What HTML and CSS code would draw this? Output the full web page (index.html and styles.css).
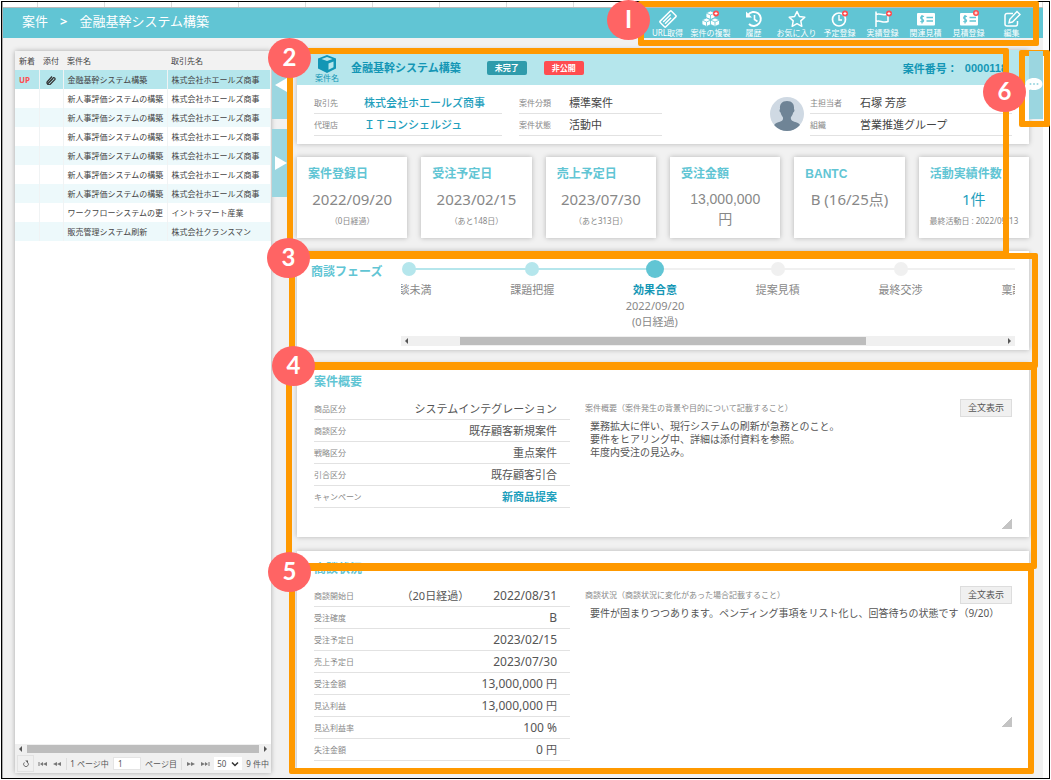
FILE: index.html
```html
<!DOCTYPE html>
<html lang="ja">
<head>
<meta charset="utf-8">
<meta name="viewport" content="width=device-width, initial-scale=1">
<title>案件 &gt; 金融基幹システム構築</title>
<link rel="stylesheet" href="styles.css">
</head>
<body>
<div class="frame">
<div class="app">
  <div class="ruler"></div>
  <header class="topbar">
    <nav class="crumbs"><span>案件</span><span class="crumb-sep">&gt;</span><span>金融基幹システム構築</span></nav>
    <div class="toolbar">
      <button type="button" class="tool">
        <svg viewBox="0 0 20 18"><g transform="rotate(-45 10 9)" fill="none" stroke="#fff" stroke-width="1.5"><rect x="2" y="5" width="16" height="8" rx="1"/><path d="M4.500 7.700H15M4.500 10.300H13"/></g></svg>
        <span>URL取得</span></button>
      <button type="button" class="tool">
        <svg viewBox="0 0 20 18"><g fill="#fff" stroke="#61c5d4" stroke-width=".8"><path d="M9.500 1l4.500 2v4.500L9.500 9.500 5 7.500V3z"/><path d="M5.500 8l4.500 2v4.500L5.500 16.500 1 14.500V10z"/><path d="M14 8l4.500 2v4.500L14 16.500 9.500 14.500V10z"/><path d="M5 3l4.500 2L14 3M9.500 5v4M1 10l4.500 2 4.500-2M5.500 12v4M9.500 10l4.500 2 4.500-2M14 12v4" fill="none"/></g><circle cx="15" cy="3.500" r="3" fill="#ff4d50"/><path d="M13.500 3.500h3M15 2v3" stroke="#fff"/></svg>
        <span>案件の複製</span></button>
      <button type="button" class="tool">
        <svg viewBox="0 0 20 18"><g fill="none" stroke="#fff" stroke-width="2"><path d="M4 5A7 7 0 1 1 5 14"/><path d="M10.500 5v4.500l3 2" stroke-width="1.600"/></g><path d="M2 1.500v6h6z" fill="#fff"/></svg>
        <span>履歴</span></button>
      <button type="button" class="tool">
        <svg viewBox="0 0 20 18"><path d="M10 1.500l2.400 5 5.400.7-4 3.700 1 5.400L10 13.700l-4.800 2.600 1-5.400-4-3.700 5.400-.7z" fill="none" stroke="#fff" stroke-width="1.500" stroke-linejoin="round"/></svg>
        <span>お気に入り</span></button>
      <button type="button" class="tool">
        <svg viewBox="0 0 20 18"><circle cx="9" cy="9.500" r="6.500" fill="none" stroke="#fff" stroke-width="1.700"/><path d="M9 5v5h3" fill="none" stroke="#fff" stroke-width="1.400"/><circle cx="15" cy="3.500" r="3" fill="#ff4d50"/><path d="M13.500 3.500h3M15 2v3" stroke="#fff"/></svg>
        <span>予定登録</span></button>
      <button type="button" class="tool">
        <svg viewBox="0 0 20 18"><path d="M3 1.500V17M3 4.500c4-2 6 2 12-.500v7.500c-6 2-8-2-12 0" fill="none" stroke="#fff" stroke-width="1.500"/><circle cx="16" cy="3.500" r="3" fill="#ff4d50"/><path d="M14.500 3.500h3M16 2v3" stroke="#fff"/></svg>
        <span>実績登録</span></button>
      <button type="button" class="tool">
        <svg viewBox="0 0 20 18"><rect x="1" y="3" width="18" height="12.500" rx="1" fill="#fff"/><path d="M8 6.500C5 5 3.500 8.500 6 9.200s2 3.500-1.700 2.300M6 5v8.500M10.500 7.500H17M10.500 11H17" fill="none" stroke="#61c5d4" stroke-width="1.300"/></svg>
        <span>関連見積</span></button>
      <button type="button" class="tool">
        <svg viewBox="0 0 20 18"><rect x="1" y="3" width="18" height="12.500" rx="1" fill="#fff"/><path d="M8 6.500C5 5 3.500 8.500 6 9.200s2 3.500-1.700 2.300M6 5v8.500M10.500 7.500H17M10.500 11H17" fill="none" stroke="#61c5d4" stroke-width="1.300"/><circle cx="17" cy="3" r="3" fill="#ff4d50"/><path d="M15.500 3h3M17 1.500v3" stroke="#fff"/></svg>
        <span>見積登録</span></button>
      <button type="button" class="tool">
        <svg viewBox="0 0 20 18"><path d="M11 3.500H5A2 2 0 0 0 3 5.500V14a2 2 0 0 0 2 2h8.500a2 2 0 0 0 2-2v-3" fill="none" stroke="#fff" stroke-width="1.500"/><path d="M15 1.500l3 3-7.500 7.500-3.500.8.800-3.500z" fill="none" stroke="#fff" stroke-width="1.400"/></svg>
        <span>編集</span></button>
      <div class="mark mark-1"><b>I</b></div>
    </div>
  </header>

  <div class="body">
    <section class="list">
      <table class="deals">
        <colgroup><col class="c-new"><col class="c-clip"><col class="c-name"><col></colgroup>
        <thead><tr><th>新着</th><th>添付</th><th>案件名</th><th>取引先名</th></tr></thead>
        <tbody>
          <tr class="selected"><td class="up">UP</td><td class="clip"><svg viewBox="0 0 10 10"><path d="M2 8.500L7.500 2.500a1.500 1.500 0 0 1 1.500 2L4.500 9a1.800 1.800 0 0 1-3-2.500L6 1.500M3 7.500L7 3.500" fill="none" stroke="#333" stroke-width="1.200"/></svg></td><td>金融基幹システム構築</td><td>株式会社ホエールズ商事</td></tr>
          <tr><td></td><td></td><td>新人事評価システムの構築</td><td>株式会社ホエールズ商事</td></tr>
          <tr><td></td><td></td><td>新人事評価システムの構築</td><td>株式会社ホエールズ商事</td></tr>
          <tr><td></td><td></td><td>新人事評価システムの構築</td><td>株式会社ホエールズ商事</td></tr>
          <tr><td></td><td></td><td>新人事評価システムの構築</td><td>株式会社ホエールズ商事</td></tr>
          <tr><td></td><td></td><td>新人事評価システムの構築</td><td>株式会社ホエールズ商事</td></tr>
          <tr><td></td><td></td><td>新人事評価システムの構築</td><td>株式会社ホエールズ商事</td></tr>
          <tr><td></td><td></td><td>ワークフローシステムの更</td><td>イントラマート産業</td></tr>
          <tr><td></td><td></td><td>販売管理システム刷新</td><td>株式会社クランスマン</td></tr>
        </tbody>
      </table>
      <div class="scroll list-scroll"><i class="arrow-l"></i><div class="thumb"></div><i class="arrow-r"></i></div>
      <div class="pager">
        <button type="button" class="refresh" aria-label="更新"><svg viewBox="0 0 10 10"><path d="M3 3a3 3 0 1 0 4 0" fill="none" stroke="#555"/><path d="M4 .500h3.500V4z" fill="#555"/></svg></button>
        <button type="button" aria-label="最初"><svg viewBox="0 0 10 6"><path d="M1 1v4" stroke="#777"/><path d="M5 1v4L2 3zM9 1v4L5 3z" fill="#777"/></svg></button>
        <button type="button" aria-label="前"><svg viewBox="0 0 10 6"><path d="M5 1v4L1 3zM9 1v4L5 3z" fill="#777"/></svg></button>
        <label class="page-label" for="page">1 ページ中</label>
        <input id="page" type="text" value="1">
        <span class="page-unit">ページ目</span>
        <button type="button" aria-label="次"><svg viewBox="0 0 10 6"><path d="M1 1v4l4-2zM5 1v4l4-2z" fill="#777"/></svg></button>
        <button type="button" aria-label="最後"><svg viewBox="0 0 10 6"><path d="M1 1v4l4-2zM5 1v4l3-2z" fill="#777"/><path d="M9 1v4" stroke="#777"/></svg></button>
        <span class="size"><select aria-label="表示件数"><option>50</option></select><svg viewBox="0 0 8 6"><path d="M1 1.500l3 3 3-3" fill="none" stroke="#333" stroke-width="1.500"/></svg></span>
        <span>9 件中</span>
      </div>
    </section>

    <div class="tabs">
      <button type="button" class="tab" aria-label="一覧を閉じる"><svg viewBox="0 0 12 16"><path d="M12 1v14L0 8z" fill="#fff"/></svg></button>
      <button type="button" class="tab" aria-label="一覧を広げる"><svg viewBox="0 0 12 16"><path d="M0 1v14l12-7z" fill="#fff"/></svg></button>
    </div>

    <main class="main">
      <section class="summary">
        <div class="card">
          <div class="deal-head">
            <div class="deal-icon"><svg viewBox="0 0 20 18"><path d="M10 0l9 3.500v10L10 18l-9-4.500v-10z" fill="#1396b5"/><path d="M10 2l5.500 2L10 6 4.500 4zM11.500 8.500l5-2v5.800l-5 2.500z" fill="#b5e6ec"/></svg><span>案件名</span></div>
            <h1>金融基幹システム構築</h1>
            <span class="badge">未完了</span>
            <span class="badge badge-red">非公開</span>
            <div class="deal-no"><span>案件番号：</span><span>0000118</span></div>
          </div>
          <div class="deal-body">
            <dl class="facts">
              <div><dt>取引先</dt><dd><a href="#">株式会社ホエールズ商事</a></dd></div>
              <div><dt>代理店</dt><dd><a href="#">ＩＴコンシェルジュ</a></dd></div>
            </dl>
            <dl class="facts">
              <div><dt>案件分類</dt><dd>標準案件</dd></div>
              <div><dt>案件状態</dt><dd>活動中</dd></div>
            </dl>
            <div class="owner">
              <svg class="avatar" viewBox="0 0 34 34"><defs><clipPath id="face"><circle cx="17" cy="17" r="17"/></clipPath></defs><g clip-path="url(#face)"><path d="M0 0h34v34H0z" fill="#cfd9e3"/><path d="M17 4c5 0 7.500 3 7 8 1 1 .300 3-.800 3.500-.700 3-2 4-2.400 5 0 3 1.500 3.500 4.500 4.500 4 1.300 6 3 7 9H2c1-6 3-7.700 7-9 3-1 4.300-1.500 4-4.500-.400-1-1.700-2-2.400-5C9.500 15 9 13 10 12c-.500-5 2-8 7-8z" fill="#6f8496"/></g></svg>
              <dl class="facts">
                <div><dt>主担当者</dt><dd>石塚 芳彦</dd></div>
                <div><dt>組織</dt><dd>営業推進グループ</dd></div>
              </dl>
            </div>
          </div>
        </div>
        <div class="kpis">
          <article class="card kpi"><h2>案件登録日</h2><p class="value">2022/09/20</p><p class="note">（0日経過）</p></article>
          <article class="card kpi"><h2>受注予定日</h2><p class="value">2023/02/15</p><p class="note">（あと148日）</p></article>
          <article class="card kpi"><h2>売上予定日</h2><p class="value">2023/07/30</p><p class="note">（あと313日）</p></article>
          <article class="card kpi"><h2>受注金額</h2><p class="value amount">13,000,000<br>円</p></article>
          <article class="card kpi"><h2>BANTC</h2><p class="value">B (16/25点)</p></article>
          <article class="card kpi"><h2>活動実績件数</h2><p class="value"><a href="#">1件</a></p><p class="note">最終活動日 : 2022/09/13</p></article>
        </div>
        <div class="mark mark-2"><b>2</b></div>
      </section>

      <section class="card phase">
        <h2>商談フェーズ</h2>
        <div class="phase-view">
          <ol class="steps">
            <li class="done"><i></i><span>商談未満</span></li>
            <li class="done"><i></i><span>課題把握</span></li>
            <li class="current"><i></i><strong>効果合意</strong><span>2022/09/20</span><span>(0日経過)</span></li>
            <li><i></i><span>提案見積</span></li>
            <li><i></i><span>最終交渉</span></li>
            <li><i></i><span>稟議申請</span></li>
          </ol>
          <div class="scroll phase-scroll"><i class="arrow-l"></i><div class="thumb"></div><i class="arrow-r"></i></div>
        </div>
        <div class="mark mark-3"><b>3</b></div>
      </section>

      <section class="card detail">
        <h2>案件概要</h2>
        <div class="cols">
          <dl class="fields">
            <div><dt>商品区分</dt><dd>システムインテグレーション</dd></div>
            <div><dt>商談区分</dt><dd>既存顧客新規案件</dd></div>
            <div><dt>戦略区分</dt><dd>重点案件</dd></div>
            <div><dt>引合区分</dt><dd>既存顧客引合</dd></div>
            <div><dt>キャンペーン</dt><dd><a href="#">新商品提案</a></dd></div>
          </dl>
          <div class="memo">
            <div class="memo-head"><label for="outline">案件概要（案件発生の背景や目的について記載すること）</label><button type="button">全文表示</button></div>
            <textarea id="outline">業務拡大に伴い、現行システムの刷新が急務とのこと。
要件をヒアリング中、詳細は添付資料を参照。
年度内受注の見込み。</textarea>
          </div>
        </div>
        <div class="mark mark-4"><b>4</b></div>
      </section>

      <section class="card detail">
        <h2>商談状況</h2>
        <div class="cols">
          <dl class="fields numeric">
            <div><dt>商談開始日</dt><dd><span class="elapsed">（20日経過）</span>2022/08/31</dd></div>
            <div><dt>受注確度</dt><dd>B</dd></div>
            <div><dt>受注予定日</dt><dd>2023/02/15</dd></div>
            <div><dt>売上予定日</dt><dd>2023/07/30</dd></div>
            <div><dt>受注金額</dt><dd>13,000,000 <small>円</small></dd></div>
            <div><dt>見込利益</dt><dd>13,000,000 <small>円</small></dd></div>
            <div><dt>見込利益率</dt><dd>100 %</dd></div>
            <div><dt>失注金額</dt><dd>0 <small>円</small></dd></div>
          </dl>
          <div class="memo">
            <div class="memo-head"><label for="status">商談状況（商談状況に変化があった場合記載すること）</label><button type="button">全文表示</button></div>
            <textarea id="status" class="tall">要件が固まりつつあります。ペンディング事項をリスト化し、回答待ちの状態です（9/20）</textarea>
          </div>
        </div>
        <div class="mark mark-5"><b>5</b></div>
      </section>
    </main>

    <aside class="side">
      <button type="button" class="tab" aria-label="コメント"><svg class="chat" viewBox="0 0 18 14"><path d="M9 0c5 0 8.500 2.500 8.500 6S14 12 9 12c-1.500 0-2.500-.200-3.500-.600L1.500 13l1.200-3.500C1.200 8.500.500 7.500.500 6 .500 2.500 4 0 9 0z" fill="#fff"/><g fill="#9bd6e0"><circle cx="5.500" cy="6" r="1"/><circle cx="9" cy="6" r="1"/><circle cx="12.500" cy="6" r="1"/></g></svg></button>
      <div class="mark mark-6"><b>6</b></div>
    </aside>
  </div>
</div>
</div>
</body>
</html>
```
FILE: styles.css
```css
* { box-sizing: border-box; }

body {
  margin: 0;
  padding: 1px;
  background: #fff;
  color: #666;
  font-family: "Noto Sans", "Noto Sans CJK JP", sans-serif;
  font-size: 11px;
}

h1, h2, p, dl, dd, ol { margin: 0; padding: 0; }
ol { list-style: none; }
button, input, select, textarea { font: inherit; color: inherit; }
button { margin: 0; padding: 0; border: 0; background: none; cursor: pointer; }
svg { display: block; }
a { color: #1fa0bd; text-decoration: none; }

.frame {
  display: flex;
  min-height: calc(100vh - 2px);
  padding-right: 6px;
  border: 1px solid #000;
}

.app {
  display: flex;
  flex: 1;
  flex-direction: column;
  min-width: 0;
  border-left: 1px solid #aaa;
  background: #f1f1f1;
}

/* tick strip above the header */
.ruler {
  height: 6px;
  border-bottom: 1px solid #bbb;
  background: repeating-linear-gradient(90deg, #fff 0 34px, #ddd 34px 35px, #fff 35px 67px);
}

/* header */
.topbar {
  display: flex;
  align-items: center;
  justify-content: space-between;
  height: 30px;
  padding: 0 10px 0 19px;
  background: #61c5d4;
  color: #fff;
}

.crumbs { display: flex; gap: 12px; padding-bottom: 4px; font-size: 13px; line-height: 18px; }
.crumb-sep { font-weight: 700; }
.toolbar { position: relative; display: flex; }

.tool {
  display: flex;
  flex-direction: column;
  align-items: center;
  width: 43px;
  height: 30px;
  padding-top: 2px;
  font-size: 8px;
  line-height: 10px;
  white-space: nowrap;
}

.tool svg { width: 20px; height: 18px; }

/* numbered outlines */
.mark {
  position: absolute;
  z-index: 2;
  border: 6px solid #ff9900;
  border-radius: 2px;
  pointer-events: none;
}

.mark b {
  position: absolute;
  width: 43px;
  height: 40px;
  border-radius: 50%;
  background: #ff6464;
  color: #fff;
  font: 700 24px/38px Lato, sans-serif;
  text-align: center;
}

.mark-1 { inset: -7px -6px -8px -8px; }
.mark-1 b { left: -37px; top: -7px; }
.mark-2 { inset: -2px 20px -19px -10px; }
.mark-2 b { left: -25px; top: -16px; }
.mark-3 { inset: 2px -9px -18px -8px; }
.mark-3 b { left: -28px; top: -21px; }
.mark-4 { inset: 0 -8px -32px -11px; }
.mark-4 b { left: -20px; top: -24px; }
.mark-5 { inset: 14px -5px -5px -8px; }
.mark-5 b { left: -27px; top: -19px; }
.mark-6 { inset: -1px -7px -8px -10px; }
.mark-6 b { left: -42px; top: 16px; }

/* page body */
.body { display: flex; flex: 1; padding: 12px 0 5px 12px; }

.list {
  display: flex;
  flex: none;
  flex-direction: column;
  width: 256px;
  margin-top: 1px;
  background: #fff;
  box-shadow: 0 0 5px rgba(0, 0, 0, .3);
}

.deals {
  width: 100%;
  border-collapse: collapse;
  table-layout: fixed;
  font-size: 8px;
  line-height: 12px;
  color: #444;
}

.c-new, .c-clip { width: 24px; }
.c-name { width: 104px; }
.deals th { height: 19px; padding: 0 4px; background: #f2f2f2; font-weight: 400; text-align: left; white-space: nowrap; }
.deals td { height: 19px; padding: 0 4px; border-right: 1px solid #f0f3f4; white-space: nowrap; overflow: hidden; }
.deals tbody tr:nth-child(odd) { background: #edf9fb; }
.deals tbody tr.selected { background: #b5e6ec; }
.deals .up { color: #ff4d50; font-weight: 700; }
.clip svg { width: 10px; height: 10px; margin: 0 auto; }

.scroll {
  display: flex;
  align-items: center;
  height: 10px;
  padding: 0 4px;
  background: #f0f0f0;
}

.scroll .thumb { height: 8px; background: #bdbdbd; }
.scroll i { flex: none; width: 3px; border: solid transparent; border-width: 3px 0; }
.scroll .arrow-l { border-right: 3px solid #555; }
.scroll .arrow-r { border-left: 3px solid #555; }
.list-scroll { gap: 5px; margin-top: auto; }
.list-scroll .thumb { flex: 1; }

.pager {
  display: flex;
  align-items: center;
  justify-content: space-between;
  height: 19px;
  padding: 0 2px;
  background: #f0f0f0;
  font-size: 8px;
  line-height: 12px;
  color: #555;
  white-space: nowrap;
}

.pager button svg { width: 10px; height: 6px; }
.pager .refresh { width: 17px; height: 17px; padding: 4px; border: 1px solid #e2e2e2; }
.pager .refresh svg { width: 8px; height: 8px; }
.page-label { padding-left: 3px; border-left: 1px solid #ddd; }
.page-unit { padding-right: 4px; border-right: 1px solid #ddd; }
.pager input { width: 28px; height: 13px; padding: 0 4px; border: 1px solid #e4e4e4; background: #fff; }
.size { display: flex; align-items: center; height: 13px; padding: 0 3px; background: #fff; }
.size select { width: 14px; padding: 0; border: 0; background: none; appearance: none; }
.size svg { width: 8px; height: 6px; }

.tabs { display: flex; flex: none; flex-direction: column; gap: 10px; width: 17px; margin: 1px 8px 0 1px; }
.tab { width: 100%; height: 68px; background: #9bd6e0; }
.tabs svg { width: 12px; height: 16px; margin: 0 auto; }

.main { flex: 1; min-width: 0; display: flex; flex-direction: column; gap: 14px; }
.card { background: #fff; box-shadow: 0 0 5px rgba(0, 0, 0, .25); }
.card h2 { color: #61c5d4; font-size: 12px; line-height: 18px; font-weight: 700; white-space: nowrap; }
.summary { position: relative; }

.deal-head {
  display: flex;
  align-items: center;
  height: 35px;
  padding: 0 22px 0 17px;
  background: #b5e6ec;
  color: #1396b5;
  white-space: nowrap;
}

.deal-icon { width: 26px; padding-top: 2px; font-size: 8px; line-height: 10px; text-align: center; }
.deal-icon svg { width: 20px; height: 18px; margin: 0 auto; }
.deal-head h1 { margin: 0 26px 0 11px; font-size: 11px; line-height: 16px; }

.badge {
  width: 40px;
  margin-right: 17px;
  border-radius: 2px;
  background: #2f9bab;
  color: #fff;
  font-size: 8px;
  line-height: 14px;
  font-weight: 700;
  text-align: center;
}

.badge-red { background: #ff4d50; }
.deal-no { display: flex; align-items: center; gap: 7px; margin-left: auto; font-family: "Liberation Sans", "Noto Sans CJK JP", sans-serif; font-weight: 700; }

.deal-body {
  display: grid;
  grid-template-columns: 188fr 143fr 333fr;
  gap: 17px;
  padding: 7px 17px 8px;
}

.facts > div { display: flex; align-items: center; height: 22px; border-bottom: 1px solid #e2e2e2; line-height: 16px; white-space: nowrap; }
.facts dt { width: 50px; font-size: 8px; color: #888; }
.facts dd { color: #444; }
.facts a { font-weight: 500; }
.owner { display: flex; align-items: center; gap: 6px; padding-left: 91px; }
.owner .facts { flex: 1; }
.avatar { flex: none; width: 34px; height: 34px; }

.kpis { display: grid; grid-template-columns: repeat(6, minmax(0, 1fr)); gap: 14px; margin-top: 13px; }
.kpi { height: 81px; padding: 8px 6px 0; text-align: center; }
.kpi h2 { padding-left: 5px; text-align: left; font-family: "Liberation Sans", "Noto Sans CJK JP", sans-serif; }
.value { margin-top: 6px; color: #888; font-size: 15px; line-height: 20px; }
.amount { font-family: "Liberation Sans", "Noto Sans CJK JP", sans-serif; font-size: 14px; }
.note { margin-top: 6px; color: #888; font-size: 8px; line-height: 12px; white-space: nowrap; }

/* phase track */
.phase { position: relative; display: flex; gap: 14px; height: 99px; margin-top: -1px; padding: 0 14px; }
.phase h2 { width: 76px; padding-top: 12px; }
.phase-view { flex: 1; min-width: 0; overflow: hidden; }
.steps { display: flex; width: 100%; height: 85px; margin-left: -53px; }

.steps li {
  position: relative;
  display: flex;
  flex: 0 0 20%;
  flex-direction: column;
  align-items: center;
  padding-top: 9px;
  color: #888;
  line-height: 16px;
  white-space: nowrap;
}

.steps li::before { content: ""; position: absolute; left: 50%; top: 17px; width: 100%; height: 2px; background: #f0f0f0; }
.steps .done::before { background: #b5e6ec; }
.steps i { position: relative; z-index: 1; width: 14px; height: 14px; margin: 2px 0 6px; border-radius: 50%; background: #f0f0f0; }
.steps .done i { background: #b5e6ec; }
.steps .current i { width: 18px; height: 18px; margin: 0 0 4px; background: #61c5d4; }
.steps strong { color: #1396b5; }
.phase-scroll { justify-content: space-between; }
.phase-scroll .thumb { width: 67%; margin-right: 15%; }

/* detail cards */
.detail { position: relative; padding: 0 17px 8px; }
.detail h2 { padding: 9px 0 7px; }
.cols { display: grid; grid-template-columns: 256fr 427fr; gap: 15px; }
.fields > div { display: flex; align-items: center; justify-content: space-between; height: 22px; padding-right: 13px; border-bottom: 1px solid #e2e2e2; line-height: 16px; white-space: nowrap; }
.fields dt { color: #888; font-size: 8px; }
.fields dd { color: #555; }
.fields a { font-weight: 700; }
.numeric dd { font-size: 12px; }
.numeric small, .elapsed { font-size: 11px; }
.elapsed { margin-right: 24px; }
.memo-head { display: flex; align-items: center; justify-content: space-between; height: 19px; color: #888; font-size: 8px; white-space: nowrap; }
.memo-head button { width: 52px; height: 18px; border: 1px solid #ddd; background: #f0f0f0; color: #555; font-size: 9px; line-height: 14px; }

.memo textarea {
  display: block;
  width: 100%;
  height: 112px;
  padding: 3px 5px;
  border: 0;
  background: transparent;
  color: #555;
  font-size: 10px;
  line-height: 13px;
  resize: both;
}

.memo textarea::-webkit-resizer {
  background: linear-gradient(135deg, transparent 0 65%, #c4c4c4 65%);
}

.memo .tall { height: 123px; }

.side { position: relative; flex: none; align-self: flex-start; width: 14px; margin-top: 1px; }
.side .tab { position: relative; z-index: 3; display: block; }
.side .chat { width: 18px; height: 14px; margin-left: -4px; }
```
